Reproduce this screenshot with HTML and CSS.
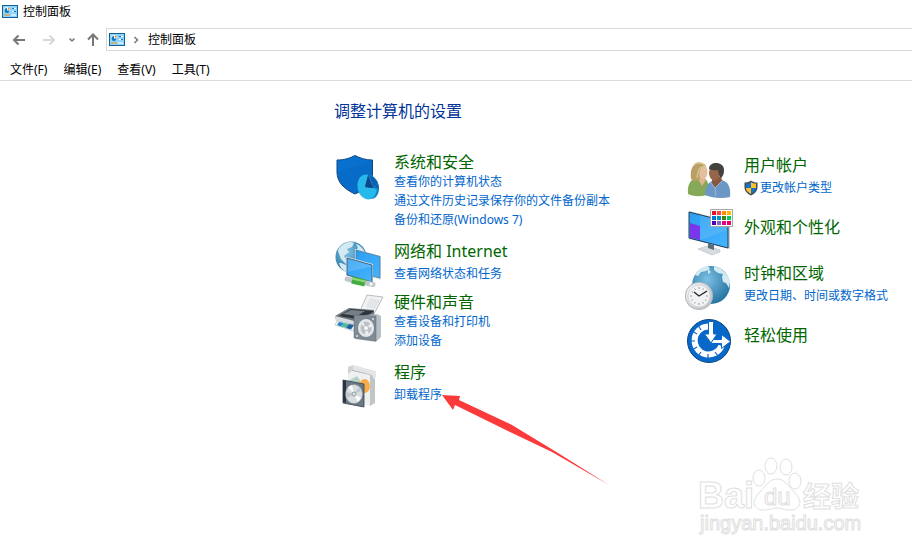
FILE: index.html
```html
<!DOCTYPE html>
<html lang="zh-CN">
<head>
  <meta charset="UTF-8">
  <meta name="viewport" content="width=device-width, initial-scale=1.0">
  <title>控制面板</title>
  <link rel="stylesheet" href="styles.css">
</head>
<body>
  <!-- shared small icon -->
  <svg class="defs" aria-hidden="true">
    <symbol id="panel-icon" viewBox="0 0 16 13">
      <rect x=".5" y=".5" width="15" height="12" fill="#8fd5fb" stroke="#10609c"/>
      <circle cx="5" cy="5" r="3" fill="#e8f6ff"/>
      <path d="M5 5.500V3A2.500 2.500 0 1 0 7.500 5.500z" fill="#1277bd"/>
      <path d="M6 2.200A3 3 0 0 1 8 4.500H6z" fill="#f0901c"/>
      <path d="M10 3.500h4M10 6.500h4" stroke="#fff"/>
      <path d="M10 3.500h2M12 6.500h2" stroke="#1277bd"/>
      <path d="M2 10h6" stroke="#f0901c"/>
      <path d="M9 10h5" stroke="#fff"/>
    </symbol>
    <linearGradient id="screen" x1="0" y1="0" x2="1" y2="1">
      <stop offset="0" stop-color="#2b9df0"/>
      <stop offset="1" stop-color="#45b4ff"/>
    </linearGradient>
    <radialGradient id="globe" cx=".4" cy=".35" r=".7">
      <stop offset="0" stop-color="#7cc0e4"/>
      <stop offset="1" stop-color="#21709f"/>
    </radialGradient>
    <linearGradient id="metal" x1="0" y1="0" x2="1" y2="1">
      <stop offset="0" stop-color="#f6f7f8"/>
      <stop offset="1" stop-color="#b7bcc2"/>
    </linearGradient>
  </svg>

  <header>
    <div class="title-bar">
      <svg class="panel-icon" aria-hidden="true"><use href="#panel-icon"/></svg>
      <h1>控制面板</h1>
    </div>

    <div class="nav-bar">
      <button type="button" class="nav-button back" aria-label="后退">
        <svg width="14" height="12" viewBox="0 0 14 12"><path d="M13 6H2M6.500 1.500L2 6l4.500 4.500"/></svg>
      </button>
      <button type="button" class="nav-button forward" aria-label="前进" disabled>
        <svg width="14" height="12" viewBox="0 0 14 12"><path d="M1 6h11M7.500 1.500L12 6l-4.500 4.500"/></svg>
      </button>
      <button type="button" class="nav-button recent" aria-label="最近浏览的位置">
        <svg width="8" height="6" viewBox="0 0 8 6"><path d="M1.500 1.500L4 4l2.500-2.500"/></svg>
      </button>
      <button type="button" class="nav-button up" aria-label="向上">
        <svg width="12" height="14" viewBox="0 0 12 14"><path d="M6 13V2M1 6.500L6 1.500l5 5"/></svg>
      </button>
      <div class="address">
        <svg class="panel-icon" aria-hidden="true"><use href="#panel-icon"/></svg>
        <svg class="chevron" width="6" height="8" viewBox="0 0 6 8" aria-hidden="true"><path d="M1.500 1L4.500 4l-3 3"/></svg>
        <button type="button" class="crumb">控制面板</button>
      </div>
    </div>

    <nav class="menu-bar">
      <button type="button">文件(F)</button>
      <button type="button">编辑(E)</button>
      <button type="button">查看(V)</button>
      <button type="button">工具(T)</button>
    </nav>
  </header>

  <main>
    <h2>调整计算机的设置</h2>

    <div class="categories">
      <div class="column">
        <section class="category roomy">
          <svg class="icon" viewBox="0 0 48 42" aria-hidden="true">
            <path d="M3 8C11 8 16 6 21 3.500C26 6 31 8 38.500 8V22C38 32 30 38 21 42C10 37 3 30 3 20z" fill="#0871cf" stroke="#0c477f"/>
            <path d="M4 20L38 9V22C37 31 31 37 21 41.500C11 37 4 30 4 20z" fill="#0863bd" opacity=".4"/>
            <ellipse cx="36" cy="35" rx="9" ry="12" fill="#1688bf" transform="rotate(-12 36 35)"/>
            <ellipse cx="33" cy="35" rx="9.500" ry="12.500" fill="#28b9ec" transform="rotate(-12 33 35)"/>
            <path d="M34 23C40 24 44 29 45 37L31 35z" fill="#0a5fae"/>
            <path d="M34 24l-3 11 8 1z" fill="#0c4786"/>
            <path d="M35 24l5 12 5 1M40 36l4-6" fill="none" stroke="#2a86d0" stroke-width=".7"/>
          </svg>
          <div class="text">
            <h3><a href="#">系统和安全</a></h3>
            <ul>
              <li><a href="#">查看你的计算机状态</a></li>
              <li><a href="#">通过文件历史记录保存你的文件备份副本</a></li>
              <li><a href="#">备份和还原(Windows 7)</a></li>
            </ul>
          </div>
        </section>

        <section class="category single">
          <svg class="icon" viewBox="0 0 48 42" aria-hidden="true">
            <circle cx="17" cy="16" r="15.500" fill="url(#globe)"/>
            <path d="M5 7C10 1 17 0 20 2l-2 4-5 2 2 3-5 4 3 4-1 4-5-5-3-8zM22 3c4 1 8 5 9 9l-4-1-2 3-4-4 3-3zM7 22l5 2 1 4-1 3c-4-2-6-5-7-9z" fill="#d3eaf3"/>
            <path d="M21 8l26 7v24l-26-7z" fill="#dfe5e8"/>
            <path d="M22 9l24 6.500V37L22 31z" fill="url(#screen)" stroke="#4a6f89" stroke-width=".7"/>
            <path d="M12 15.500l27 7.500v19l-27-7.500z" fill="#dfe5e8"/>
            <path d="M13 17l25 7v17l-25-7z" fill="url(#screen)" stroke="#344c5d" stroke-width=".8"/>
            <path d="M13.500 17.500l24 7v1L13.500 31z" fill="#fff" opacity=".16"/>
            <path d="M13 38l26 5.500" stroke="#c1c8ca" stroke-width="5" stroke-linecap="round"/>
            <path d="M18 39l13 3" stroke="#43ae3d" stroke-width="7"/>
            <path d="M18 37.500l13 3" stroke="#8fda78" stroke-width="2"/>
            <circle cx="37" cy="43" r="1.500" fill="#fff"/>
          </svg>
          <div class="text">
            <h3><a href="#">网络和 Internet</a></h3>
            <ul>
              <li><a href="#">查看网络状态和任务</a></li>
            </ul>
          </div>
        </section>

        <section class="category roomy">
          <svg class="icon" viewBox="0 0 48 42" aria-hidden="true">
            <path d="M26 19L33 3l16 2-9 17z" fill="#f0f2f3" stroke="#a9aeb3" stroke-width=".8"/>
            <path d="M32 15l4-9 10 2-5 9z" fill="#e2e6e9"/>
            <path d="M1 24L15 16l25 2v13l-17 4-21-7z" fill="#6d757d"/>
            <path d="M5 24l12-7 23 2-12 9z" fill="#2e353b"/>
            <path d="M9 22l8-4 14 1-8 5z" fill="#777f86"/>
            <path d="M1 24l23 6v5L2 29z" fill="#d7dce0"/>
            <path d="M3 29l19 4-3 6-18-6z" fill="#f7fafb" stroke="#9ba4ab" stroke-width=".5"/>
            <path d="M5 30l5 1-3 3.500-4-1.500z" fill="#2285c5"/>
            <path d="M10 31l5 1-3 4-5-1.500z" fill="#51b89e"/>
            <path d="M15 32l5 1-3 4.500-5-1.500z" fill="#225d9f"/>
            <path d="M21 24l22-2 4 2v21l-5 5-21-3z" fill="#b8c0c7"/>
            <path d="M20 23l22 1v25l-22-3z" fill="#7f8b95" stroke="#5c6770" stroke-width=".5"/>
            <ellipse cx="32" cy="36" rx="8.500" ry="9.500" fill="#e2e6e8" stroke="#65717a" stroke-width=".7"/>
            <ellipse cx="32" cy="36" rx="6" ry="7" fill="#bac2c8" stroke="#f4f5f5" stroke-width=".7"/>
            <path d="M32 36l-5-4 2-2zM32 36l5-5 1 4zM32 36l3 6-4 1z" fill="#edf0f2"/>
            <circle cx="32" cy="36" r="2.500" fill="#f7f8f8" stroke="#929ca3" stroke-width=".5"/>
            <circle cx="23" cy="44" r="1" fill="#dce1e4"/><circle cx="39" cy="27" r="1" fill="#dce1e4"/>
          </svg>
          <div class="text">
            <h3><a href="#">硬件和声音</a></h3>
            <ul>
              <li><a href="#">查看设备和打印机</a></li>
              <li><a href="#">添加设备</a></li>
            </ul>
          </div>
        </section>

        <section class="category single">
          <svg class="icon" viewBox="0 0 48 42" aria-hidden="true">
            <path d="M14 9l22 4v31l-22-6z" fill="#eff0f0"/>
            <path d="M36 13l5-4v32l-5 3z" fill="#c2c5c6"/>
            <path d="M14 8l5-4 22 6-5 3z" fill="#a9aeb0"/>
            <path d="M14 5l5-2v5l-5 4z" fill="#cfd2d3"/>
            <path d="M19 3l23 6v6l-2 2-2-4-19-5z" fill="#e3e5e6"/>
            <path d="M14 19l9-5 3 4v18l4 6-11-2z" fill="#b6d2c3"/>
            <ellipse cx="30.500" cy="24" rx="5.500" ry="7" fill="#f8ad4c"/>
            <path d="M9 18l21 4v23L9 41z" fill="#6b7884" stroke="#34424e" stroke-width=".8"/>
            <path d="M9 18l3 1v22l-3-1z" fill="#263440"/>
            <ellipse cx="20" cy="32" rx="8.500" ry="9.500" fill="#d9dee0" stroke="#8e999f" stroke-width=".5"/>
            <path d="M20 32l-6-7 4-2zM20 32l7 4-3 4z" fill="#fff"/>
            <path d="M20 32l-8-2 1 6zM20 32l5-7 2 4z" fill="#bec7cb"/>
            <circle cx="20" cy="32" r="2.500" fill="#a6b1b6"/>
            <circle cx="20" cy="32" r="1" fill="#f8fafa"/>
          </svg>
          <div class="text">
            <h3><a href="#">程序</a></h3>
            <ul>
              <li class="pointed">
                <a href="#">卸载程序</a>
                <svg class="arrow" viewBox="0 0 168 92" aria-hidden="true"><path d="M0 1L18 2L17 6L70 31L116 59L167 91L110 58L68 38L13 11L11 16z" fill="#fb3b3b"/></svg>
              </li>
            </ul>
          </div>
        </section>
      </div>

      <div class="column right">
        <section class="category single">
          <svg class="icon" viewBox="0 0 48 42" aria-hidden="true">
            <path d="M4 39C3 29 7 24 13 23h7c4 2 5 7 5 16-7 3-14 3-21 0z" fill="#86a957"/>
            <path d="M13 22l7-1 2 4-4 6z" fill="#dfb68f"/>
            <ellipse cx="19" cy="17" rx="4.500" ry="7" fill="#e5bf9b"/>
            <path d="M22 11c-2-4-12-4-14 2-2 5-1 9-1 11 4 3 8 2 9 0-1-5-1-8 1-11z" fill="#b99f66"/>
            <path d="M10 10c3-3 9-3 11 1l-5 2c-3 3-2 7-3 10" fill="none" stroke="#d7c38b" stroke-width="1.500"/>
            <path d="M21 40C21 31 25 26 31 25h7c6 2 9 7 8 17-8 2-18 1-25-2z" fill="#6c96c4"/>
            <path d="M28 23l9-2 1 5-7 7-3-5z" fill="#87583d"/>
            <ellipse cx="30.500" cy="18" rx="5.500" ry="7.500" fill="#96654a"/>
            <path d="M25 14c0-8 15-8 15 1 0 4-1 6-3 8l-2-3-1-5c-3 1-6 0-9-1z" fill="#45413f"/>
            <path d="M26 27l5 6 7-7M31 33l1 8" fill="none" stroke="#97b8d9"/>
          </svg>
          <div class="text">
            <h3><a href="#">用户帐户</a></h3>
            <ul>
              <li>
                <a href="#" class="with-shield">
                  <svg width="14" height="16" viewBox="0 0 14 16" aria-hidden="true">
                    <path d="M.5 2.500C3 2.500 5 2 7 .500C9 2 11 2.500 13.500 2.500V7C13.500 11 11 13.500 7 15.500C3 13.500.5 11 .5 7z" fill="#414b55"/>
                    <path d="M7 2C5.500 3 4 3.500 2 3.500V8h5z" fill="#1972c5"/>
                    <path d="M7 2C8.500 3 10 3.500 12 3.500V8H7z" fill="#fec32c"/>
                    <path d="M7 14C4 12.500 2 11 2 8h5z" fill="#fec32c"/>
                    <path d="M7 14C10 12.500 12 11 12 8H7z" fill="#1972c5"/>
                  </svg>
                  更改帐户类型
                </a>
              </li>
            </ul>
          </div>
        </section>

        <section class="category roomy">
          <svg class="icon" viewBox="0 0 48 42" aria-hidden="true">
            <path d="M14 43l9-3 13 4v2l-8 3z" fill="#d4dce1" stroke="#aab5bc" stroke-width=".5"/>
            <path d="M24 37l6 2v5l-6-2z" fill="#596b77"/>
            <path d="M5 5l41 10v28L5 33z" fill="#c9d2d7"/>
            <path d="M5 6l39 10v26L5 32z" fill="url(#screen)" stroke="#203c52"/>
            <path d="M6 17l10 3v14L6 31.500z" fill="#7b35ea"/>
            <path d="M16 9l27 7.500v8L16 34z" fill="#fff" opacity=".1"/>
            <path d="M26.500 3.500h22v17h-22z" fill="#fff" stroke="#a7a7a7"/>
            <path d="M28 5h4v4h-4z" fill="#e81123"/><path d="M33 5h4v4h-4z" fill="#ff4343"/><path d="M38 5h4v4h-4z" fill="#ff8c00"/><path d="M43 5h4v4h-4z" fill="#ffb900"/>
            <path d="M28 10h4v4h-4z" fill="#0078d7"/><path d="M33 10h4v4h-4z" fill="#0099bc"/><path d="M38 10h4v4h-4z" fill="#498205"/><path d="M43 10h4v4h-4z" fill="#00cc6a"/>
            <path d="M28 15h4v4h-4z" fill="#4b00bd"/><path d="M33 15h4v4h-4z" fill="#8764b8"/><path d="M38 15h4v4h-4z" fill="#e3008c"/><path d="M43 15h4v4h-4z" fill="#ea005e"/>
          </svg>
          <div class="text">
            <h3><a href="#">外观和个性化</a></h3>
          </div>
        </section>

        <section class="category single">
          <svg class="icon" viewBox="0 0 48 42" aria-hidden="true">
            <circle cx="27" cy="22" r="19" fill="url(#globe)"/>
            <path d="M11 12C15 6 20 3 24 3l2 3-4 2-5 1-3 4zM30 3c8 2 14 8 16 15l-1 7-3-5-3-1-1-5 1-3-5-1-4-3zM24 6l3 3-3 2z" fill="#d3eaf3"/>
            <circle cx="15" cy="33" r="14" fill="#b6bbc0"/>
            <circle cx="15" cy="33" r="13" fill="url(#metal)"/>
            <circle cx="15" cy="33" r="11" fill="#f1f2f4" stroke="#cdd0d3" stroke-width=".7"/>
            <path d="M15 24v2M15 40v2M6 33h2M22 33h2M10.500 25.500l1 1.500M19.500 25.500l-1 1.500M7.500 28.500l1.500 1M22.500 28.500l-1.500 1M7.500 37.500l1.500-1M22.500 37.500l-1.500-1M10.500 40.500l1-1.500M19.500 40.500l-1-1.500" stroke="#888" stroke-width=".8"/>
            <path d="M10 29l5 4 8-5" fill="none" stroke="#222" stroke-width="1.300"/>
          </svg>
          <div class="text">
            <h3><a href="#">时钟和区域</a></h3>
            <ul>
              <li><a href="#">更改日期、时间或数字格式</a></li>
            </ul>
          </div>
        </section>

        <section class="category">
          <svg class="icon" viewBox="0 0 48 42" aria-hidden="true">
            <circle cx="25" cy="27" r="21.500" fill="#0768ca" stroke="#0b4681"/>
            <path d="M24 12.500A14 14 0 1 0 37.500 32" fill="none" stroke="#fff" stroke-width="6"/>
            <path d="M17 16l-3-5M13 20l-5-3M11 27H6M13 33l-5 3M17 38l-3 4M24 40v5M31 38l4 5" stroke="#0768ca" stroke-width="1.200"/>
            <path d="M24.500 7.500h5V20H33L27 29L20.500 20h4z" fill="#fff" stroke="#0768ca"/>
            <path d="M29.500 25.500h8v-5l9 7-9 7v-5h-11z" fill="#fff" stroke="#0768ca"/>
          </svg>
          <div class="text">
            <h3><a href="#">轻松使用</a></h3>
          </div>
        </section>
      </div>
    </div>
  </main>

  <svg class="watermark" viewBox="0 0 166 84" role="img" aria-label="Baidu经验">
    <g class="outline">
      <text x="0" y="54" class="brand">Bai</text>
      <path d="M79 25C87 25 91 33 97 39C106 48 101 56 93 56C86 56 83 54 79 54C75 54 72 56 65 56C57 56 52 48 61 39C67 33 71 25 79 25z"/>
      <ellipse cx="61" cy="24" rx="6" ry="8"/>
      <ellipse cx="73" cy="12" rx="6" ry="8"/>
      <ellipse cx="88" cy="13" rx="6" ry="8"/>
      <ellipse cx="97" cy="27" rx="6" ry="8"/>
      <text x="66" y="51" class="du">du</text>
      <text x="105" y="53" class="brand-cn">经验</text>
      <text x="2" y="76" class="site">jingyan.baidu.com</text>
    </g>
  </svg>
</body>
</html>
```

FILE: styles.css
```css
* {
  box-sizing: border-box;
  margin: 0;
  padding: 0;
}

body {
  position: relative;
  min-height: 100vh;
  background: #fff;
  color: #000;
  font-family: "Noto Sans", "Noto Sans CJK SC", sans-serif;
  font-size: 12px;
  line-height: 19px;
}

button {
  background: none;
  border: none;
  color: inherit;
  font: inherit;
  cursor: pointer;
}

a {
  color: #0066cc;
  text-decoration: none;
}

a:hover {
  text-decoration: underline;
}

ul {
  list-style: none;
}

.defs {
  position: absolute;
  width: 0;
  height: 0;
}

.panel-icon {
  width: 16px;
  height: 13px;
}

/* window header */
.title-bar {
  display: flex;
  align-items: center;
  gap: 5px;
  height: 23px;
  padding-left: 2px;
}

.title-bar h1 {
  font-size: 12px;
  font-weight: normal;
}

.nav-bar {
  display: flex;
  align-items: center;
  height: 33px;
  padding-left: 12px;
}

.nav-button {
  display: flex;
  align-items: center;
  justify-content: center;
  width: 14px;
  height: 23px;
}

.nav-button path,
.chevron path {
  fill: none;
  stroke: #777;
  stroke-width: 2;
}

.forward {
  margin-left: 16px;
  cursor: default;
}

.forward path {
  stroke: #d8d8d8;
}

.recent {
  margin-left: 9px;
}

.up {
  margin-left: 7px;
}

.recent path,
.chevron path {
  stroke-width: 1.5;
}

.address {
  display: flex;
  flex: 1;
  align-items: center;
  height: 23px;
  margin-left: 6px;
  padding-left: 2px;
  border: 1px solid #d9d9d9;
  border-right: none;
}

.chevron {
  margin: 0 9px 0 8px;
}

.menu-bar {
  display: flex;
  align-items: center;
  gap: 16px;
  height: 25px;
  padding: 3px 0 0 10px;
  border-bottom: 1px solid #dcdcdc;
}

/* categories */
main {
  padding: 20px 0 0 334px;
}

h2 {
  color: #003399;
  font-size: 16px;
  font-weight: normal;
  line-height: 20px;
}

.categories {
  display: grid;
  grid-template-columns: 350px 1fr;
  margin-top: 31px;
}

.right {
  padding-top: 3px;
}

.category {
  display: flex;
  gap: 12px;
  min-height: 42px;
  margin-bottom: 9px;
}

.category.roomy {
  margin-bottom: 12px;
}

.right .roomy {
  margin-bottom: 15px;
}

.right .single + .category,
.right .roomy + .category {
  align-items: center;
}

.icon {
  flex: none;
  width: 48px;
  height: 42px;
  overflow: visible;
}

h3 {
  font-size: 16px;
  font-weight: normal;
  line-height: 20px;
}

h3 a {
  color: #006600;
}

.single ul {
  margin-top: 3px;
}

li {
  height: 19px;
  white-space: nowrap;
}

.with-shield {
  display: flex;
  align-items: center;
  gap: 2px;
}

.pointed {
  position: relative;
}

.arrow {
  position: absolute;
  top: 9px;
  left: 48px;
  width: 168px;
  height: 92px;
}

/* watermark */
.watermark {
  position: absolute;
  right: 48px;
  bottom: 17px;
  width: 166px;
  height: 84px;
}

.outline {
  fill: #fff;
  stroke: #e0e0e0;
  stroke-width: 1;
}

.brand {
  font: bold 36px "Liberation Sans", sans-serif;
}

.du {
  font: 24px "Liberation Sans", sans-serif;
}

.brand-cn {
  font: bold 28px "Noto Sans CJK SC", sans-serif;
}

.site {
  font: 20px "Liberation Sans", sans-serif;
}
```
